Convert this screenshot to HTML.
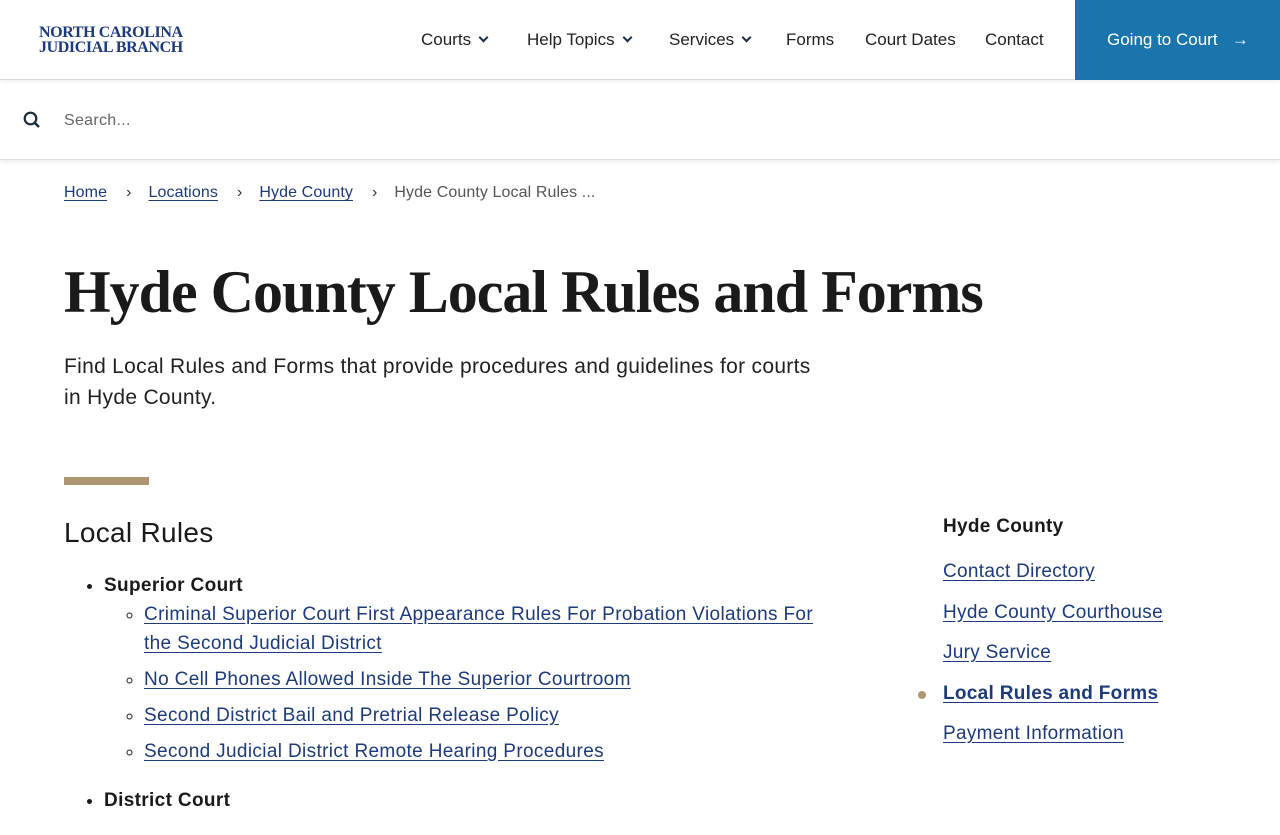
<!DOCTYPE html>
<html><head><meta charset="utf-8"><style>
*{margin:0;padding:0;box-sizing:border-box}
body{width:1280px;height:800px;overflow:hidden;background:#fff;font-family:"Liberation Sans",sans-serif;color:#1a1a1a}
a{color:#1d3a7a;text-decoration:underline;text-underline-offset:3px}
.hdr{height:80px;position:relative;border-bottom:1px solid #ddd;box-shadow:0 2px 3px rgba(0,0,0,.06)}
.logo{position:absolute;left:39px;top:25px;font-family:"Liberation Serif",serif;font-weight:bold;color:#1d3a7a;font-size:16px;line-height:15px;letter-spacing:-.4px}
.nav{position:absolute;top:30px;font-size:17px;color:#222}
.nav span.ch{display:inline-block;width:7px;height:7px;border-right:2px solid #1a2a4a;border-bottom:2px solid #1a2a4a;transform:rotate(45deg);margin-left:9px;position:relative;top:-4px}
.go{position:absolute;right:0;top:0;width:205px;height:80px;background:#1b75ad;color:#fff;font-size:17px;padding:30px 0 0 32px}
.search{height:80px;position:relative;border-bottom:1px solid #e0e0e0;box-shadow:0 2px 4px rgba(0,0,0,.08)}
.search .t{position:absolute;left:64px;top:32px;font-size:16px;color:#666;letter-spacing:.3px}
.bc{position:absolute;top:184px;left:64px;font-size:16px;color:#555;letter-spacing:.1px}
.bc .s{margin:0 17px 0 19px;color:#333}
h1{position:absolute;left:64px;top:258px;font-family:"Liberation Serif",serif;font-size:60px;font-weight:bold;letter-spacing:-1px;color:#1a1a1a}
.intro{position:absolute;left:64px;top:351px;width:780px;font-size:21px;letter-spacing:.3px;line-height:31px;color:#222}
.bar{position:absolute;left:64px;top:477px;width:85px;height:8px;background:#ae9673}
h2{position:absolute;left:64px;top:517px;font-size:28px;font-weight:normal;color:#1a1a1a;letter-spacing:.3px}
ul.l1{position:absolute;left:104px;top:571px;list-style:disc;font-size:19px;line-height:29px;letter-spacing:.35px}
ul.l1>li{font-weight:bold;margin-bottom:20px}
ul.l2{list-style:circle;margin-left:40px;font-weight:normal}
ul.l2 li{line-height:29px;margin-bottom:7px;width:690px}
.side{position:absolute;left:943px;top:516px;letter-spacing:.3px}
.side h3{font-size:19px;font-weight:bold;margin-bottom:23px}
.side a{display:block;font-size:19px;line-height:22px;margin-bottom:18.5px;position:relative}
.side a.b{font-weight:bold}
.side a.b:before{content:"";position:absolute;left:-25px;top:8px;width:8px;height:8px;border-radius:50%;background:#ae9673}
</style></head><body>
<div class="hdr">
<div class="logo">NORTH CAROLINA<br>JUDICIAL BRANCH</div>
<div class="nav" style="left:421px">Courts<span class="ch"></span></div>
<div class="nav" style="left:527px">Help Topics<span class="ch"></span></div>
<div class="nav" style="left:669px">Services<span class="ch"></span></div>
<div class="nav" style="left:786px">Forms</div>
<div class="nav" style="left:865px">Court Dates</div>
<div class="nav" style="left:985px">Contact</div>
<div class="go">Going to Court &nbsp;&nbsp;→</div>
</div>
<div class="search">
<svg style="position:absolute;left:23px;top:31px" width="18" height="18" viewBox="0 0 18 18"><circle cx="7.5" cy="7.5" r="5.8" fill="none" stroke="#1a2a3a" stroke-width="2.2"/><line x1="11.8" y1="11.8" x2="16" y2="16" stroke="#1a2a3a" stroke-width="2.4"/></svg>
<div class="t">Search...</div>
</div>
<div class="bc"><a>Home</a><span class="s">›</span><a>Locations</a><span class="s">›</span><a>Hyde County</a><span class="s">›</span>Hyde County Local Rules ...</div>
<h1>Hyde County Local Rules and Forms</h1>
<div class="intro">Find Local Rules and Forms that provide procedures and guidelines for courts<br>in Hyde County.</div>
<div class="bar"></div>
<h2>Local Rules</h2>
<ul class="l1"><li>Superior Court
<ul class="l2">
<li><a>Criminal Superior Court First Appearance Rules For Probation Violations For<br>the Second Judicial District</a></li>
<li><a>No Cell Phones Allowed Inside The Superior Courtroom</a></li>
<li><a>Second District Bail and Pretrial Release Policy</a></li>
<li><a>Second Judicial District Remote Hearing Procedures</a></li>
</ul></li>
<li>District Court</li></ul>
<div class="side"><h3>Hyde County</h3>
<a>Contact Directory</a><a>Hyde County Courthouse</a><a>Jury Service</a><a class="b">Local Rules and Forms</a><a>Payment Information</a></div>
</body></html>
